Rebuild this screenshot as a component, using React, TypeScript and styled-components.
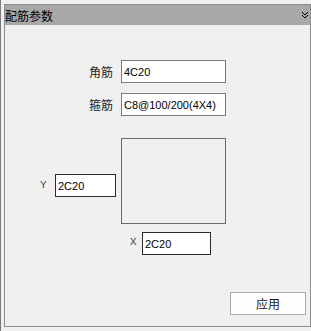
import React from 'react';
import styled, { createGlobalStyle } from 'styled-components';

const GlobalStyle = createGlobalStyle`
  html, body {
    margin: 0;
    padding: 0;
    background: #f0f0f0;
  }
  body {
    font-family: "Noto Sans CJK SC", "Liberation Sans", sans-serif;
  }
`;

const Frame = styled.div`
  width: 311px;
  height: 331px;
  box-sizing: border-box;
  background: #f0f0f0;
  border-left: 1px solid #7a7a7a;
  padding: 4px 0 0 3px;
`;

const Panel = styled.div`
  width: 307px;
  height: 323px;
  box-sizing: border-box;
  border: 1px solid #8c8c8c;
  display: flex;
  flex-direction: column;
`;

const Header = styled.div`
  height: 20px;
  background: #a8a8a8;
  display: flex;
  align-items: center;
  justify-content: space-between;
  padding: 1px 2px 0 0;
  box-sizing: border-box;
`;

const Title = styled.span`
  font-size: 12px;
  color: #000;
  line-height: 20px;
`;

const Body = styled.div`
  flex: 1;
  display: flex;
  flex-direction: column;
  padding-top: 35px;
`;

const FormGrid = styled.div`
  display: grid;
  grid-template-columns: 108px 105px;
  column-gap: 8px;
  row-gap: 10px;
  align-items: center;
`;

const Label = styled.span`
  text-align: right;
  font-size: 12px;
  color: #222;
`;

const Field = styled.div<{ $w: number; $dark?: boolean }>`
  width: ${(p) => p.$w}px;
  height: 23px;
  box-sizing: border-box;
  background: #fff;
  border: 1px solid ${(p) => (p.$dark ? '#2a2a2a' : '#7a7a7a')};
  font-family: "Liberation Sans", Arial, sans-serif;
  font-size: 11px;
  color: #000;
  display: flex;
  align-items: center;
  padding-left: 2px;
`;

const Diagram = styled.div`
  display: flex;
  margin-top: 22px;
  padding-left: 35px;
`;

const AxisLabel = styled.span<{ $top: number; $w: number }>`
  font-family: "Liberation Mono", monospace;
  font-size: 11px;
  color: #444;
  width: ${(p) => p.$w}px;
  margin-top: ${(p) => p.$top}px;
`;

const SideField = styled(Field)`
  margin-top: 36px;
  margin-right: 5px;
`;

const Box = styled.div`
  width: 105px;
  height: 86px;
  box-sizing: border-box;
  border: 1px solid #6c6c6c;
`;

const XRow = styled.div`
  display: flex;
  margin-top: 8px;
  padding-left: 125px;
`;

const Footer = styled.div`
  margin-top: auto;
  display: flex;
  justify-content: flex-end;
  padding: 0 4px 11px 0;
`;

const Button = styled.div`
  width: 76px;
  height: 23px;
  box-sizing: border-box;
  border: 1px solid #adadad;
  background: #fdfdfd;
  font-size: 12px;
  color: #222;
  display: flex;
  align-items: center;
  justify-content: center;
`;

const Chevron = () => (
  <svg width="6" height="7" viewBox="0 0 6 7">
    <path d="M0 0h1v1h1v1h2v-1h1v-1h1v1h-1v1h-1v1h-2v-1h-1v-1h-1z" fill="#000" />
    <path d="M0 3h1v1h1v1h2v-1h1v-1h1v1h-1v1h-1v1h-2v-1h-1v-1h-1z" fill="#000" />
  </svg>
);

const App: React.FC = () => (
  <>
    <GlobalStyle />
    <Frame>
      <Panel>
        <Header>
          <Title>配筋参数</Title>
          <Chevron />
        </Header>
        <Body>
          <FormGrid>
            <Label>角筋</Label>
            <Field $w={105}>4C20</Field>
            <Label>箍筋</Label>
            <Field $w={105}>C8@100/200(4X4)</Field>
          </FormGrid>
          <Diagram>
            <AxisLabel $top={41} $w={15}>Y</AxisLabel>
            <SideField $w={61} $dark>
              2C20
            </SideField>
            <Box />
          </Diagram>
          <XRow>
            <AxisLabel $top={4} $w={12}>X</AxisLabel>
            <Field $w={69} $dark>
              2C20
            </Field>
          </XRow>
          <Footer>
            <Button>应用</Button>
          </Footer>
        </Body>
      </Panel>
    </Frame>
  </>
);

export default App;
